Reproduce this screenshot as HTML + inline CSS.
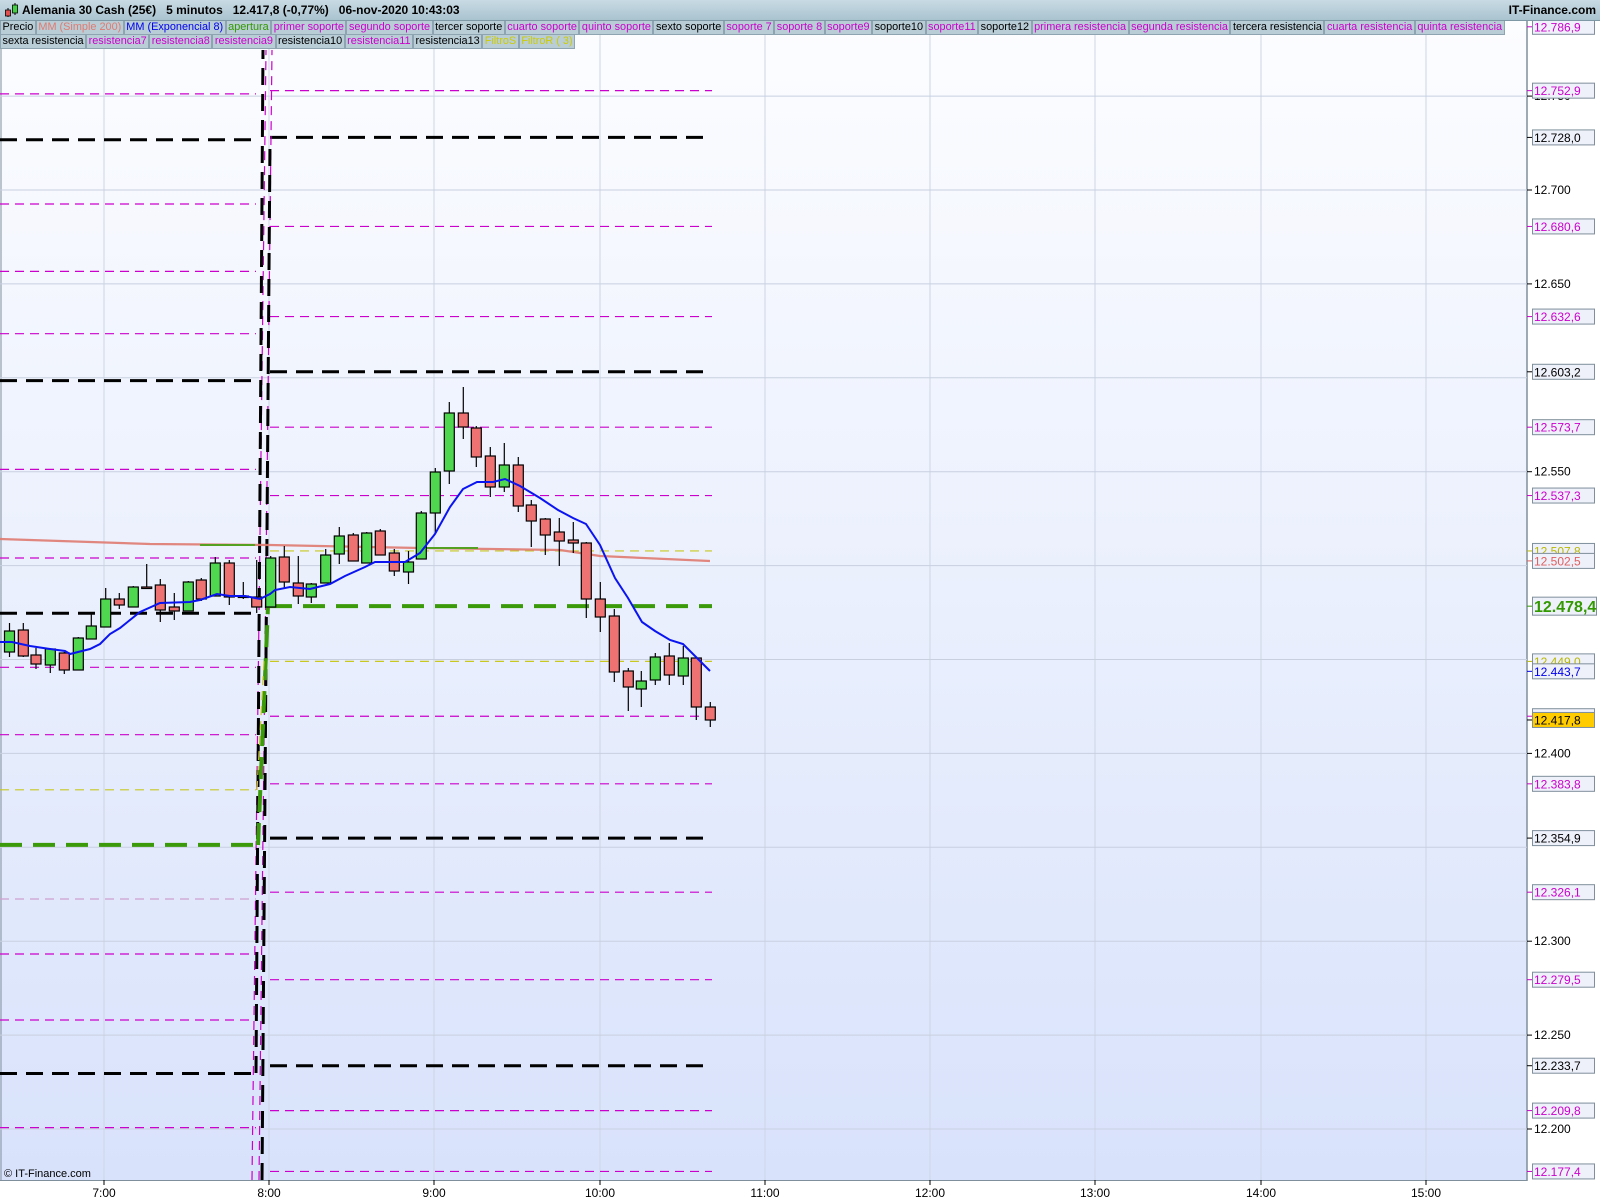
<!DOCTYPE html>
<html><head><meta charset="utf-8">
<style>
html,body{margin:0;padding:0;width:1600px;height:1200px;overflow:hidden;background:#fff;font-family:"Liberation Sans",Arial,sans-serif;}
#hdr{position:absolute;left:0;top:0;width:1600px;height:20px;background:linear-gradient(#c9dbe4,#a9c3cf);border-bottom:1px solid #7f98a6;font-weight:bold;font-size:12px;line-height:20px;}
#hdr .t{position:absolute;left:22px;top:0;white-space:pre;}
#hdr .r{position:absolute;right:4px;top:0;}
.leg{position:absolute;left:0;height:14px;display:flex;font-size:10.9px;line-height:13px;white-space:nowrap;}
.leg span{background:#b9cdd7;border:1px solid #8ea4b0;border-top:none;padding:0 1.5px;height:13px;}
#chart{position:absolute;left:0;top:0;}
</style></head><body>
<svg id="chart" width="1600" height="1200" xmlns="http://www.w3.org/2000/svg">
<defs><linearGradient id="bg" x1="0" y1="0" x2="0" y2="1"><stop offset="0" stop-color="#fcfdff"/><stop offset="1" stop-color="#d8e2fb"/></linearGradient></defs>
<rect x="0" y="20" width="1527" height="1160" fill="url(#bg)"/>
<line x1="1527" y1="20" x2="1527" y2="1181" stroke="#7f8f9c" stroke-width="1.5"/>
<line x1="0" y1="1180.5" x2="1527" y2="1180.5" stroke="#7f8f9c"/>
<line x1="1" y1="20" x2="1" y2="1180" stroke="#7f8f9c"/>
<g id="g"></g>
</svg>
<div id="hdr"><span class="t">Alemania 30 Cash (25€)   5 minutos   12.417,8 (-0,77%)   06-nov-2020 10:43:03</span><span class="r">IT-Finance.com</span></div>
<svg style="position:absolute;left:4px;top:2px" width="16" height="16"><line x1="4" y1="6" x2="4" y2="15" stroke="#000"/><rect x="1.5" y="8" width="5" height="6" fill="#e05050" stroke="#000" stroke-width="0.8"/><line x1="11" y1="1" x2="11" y2="13" stroke="#000"/><rect x="8.5" y="3" width="5" height="8" fill="#40d040" stroke="#000" stroke-width="0.8"/></svg>
<div class="leg" style="top:21px">
<span>Precio</span><span style="color:#e07a70">MM (Simple 200)</span><span style="color:#0000ee">MM (Exponencial 8)</span><span style="color:#339900">apertura</span><span style="color:#cc00cc">primer soporte</span><span style="color:#cc00cc">segundo soporte</span><span>tercer soporte</span><span style="color:#cc00cc">cuarto soporte</span><span style="color:#cc00cc">quinto soporte</span><span>sexto soporte</span><span style="color:#cc00cc">soporte 7</span><span style="color:#cc00cc">soporte 8</span><span style="color:#cc00cc">soporte9</span><span>soporte10</span><span style="color:#cc00cc">soporte11</span><span>soporte12</span><span style="color:#cc00cc">primera resistencia</span><span style="color:#cc00cc">segunda resistencia</span><span>tercera resistencia</span><span style="color:#cc00cc">cuarta resistencia</span><span style="color:#cc00cc">quinta resistencia</span>
</div>
<div class="leg" style="top:35px">
<span>sexta resistencia</span><span style="color:#cc00cc">resistencia7</span><span style="color:#cc00cc">resistencia8</span><span style="color:#cc00cc">resistencia9</span><span>resistencia10</span><span style="color:#cc00cc">resistencia11</span><span>resistencia13</span><span style="color:#cccc00">FiltroS</span><span style="color:#cccc00">FiltroR ( 3)</span>
</div>
<script>
var g=document.getElementById('g'),h='';
function Y(p){return 190+(12700-p)*1.878;}
[104,269,434,600,765,930,1095,1261,1426].forEach(function(x){h+='<line x1="'+x+'" y1="20" x2="'+x+'" y2="1180" stroke="#cdd5e4"/>';});
for(var p=12200;p<=12750;p+=50){var y=Y(p);h+='<line x1="0" y1="'+y+'" x2="1527" y2="'+y+'" stroke="#c8d0e0"/>';}
var M='#cc00cc',K='#000',G='#339900',YE='#c8c800';
function st(c){if(c==K)return 'stroke="#000" stroke-width="3" stroke-dasharray="17 9"';if(c==G)return 'stroke="#3a9a0a" stroke-width="4" stroke-dasharray="22 11"';if(c==YE)return 'stroke="#c8c820" stroke-width="1.2" stroke-dasharray="9 6"';return 'stroke="'+c+'" stroke-width="1.2" stroke-dasharray="9 6"';}
function L(x1,y1,x2,y2,c){h+='<line x1="'+x1+'" y1="'+y1+'" x2="'+x2+'" y2="'+y2+'" '+st(c)+'/>';}
var left=[[93.9,M],[139.8,K],[204,M],[271.4,M],[333.7,M],[380.6,K],[469.4,M],[558,M],[613.3,K],[667.3,M],[734.7,M],[789.8,YE],[844.9,G],[899,'#d0a0d0'],[954,M],[1020,M],[1073.5,K],[1127.6,M]];
left.forEach(function(a){L(0,a[0],256,a[0],a[1]);});
var right=[[12752.9,M],[12728.0,K],[12680.6,M],[12632.6,M],[12603.2,K],[12573.7,M],[12537.3,M],[12507.8,YE],[12478.4,G],[12449.0,YE],[12419.8,M],[12383.8,M],[12354.9,K],[12326.1,M],[12279.5,M],[12233.7,K],[12209.8,M],[12177.4,M]];
right.forEach(function(a){L(270,Y(a[0]),712,Y(a[0]),a[1]);});
L(252,1180,266,50,M);L(259,1180,272,50,M);
L(262,1180,270,140,K);L(256,1073,263,50,K);
L(258,845,268,606,G);L(257,790,264,661,YE);
h+='<polyline fill="none" stroke="#e07a70" stroke-width="2.2" opacity="0.9" points="0,539 150,544 270,545 420,548 560,550 600,556 710,561"/>';
h+='<polyline fill="none" stroke="#55a020" stroke-width="2" points="200,545 255,545"/>';
h+='<polyline fill="none" stroke="#55a020" stroke-width="2" points="420,548 478,548"/>';
var C=[[9.5,652,631,623,657],[23.3,630,656,623,657],[36,655,664,648,669],[50.3,665,649,649,673],[64.3,653,670,652,674],[78.3,670,638,637,670],[91.3,639,626,614,639],[105.7,627,599,588,627],[119.3,599,605,593,609],[133.3,607,587,586,607],[146.7,587,588,564,588],[160.3,585,610,579,622],[174.3,607,611,593,620],[188.3,611,582,581,611],[201.3,580,599,578,601],[215.3,596,563,557,596],[229.3,563,597,560,605],[243.3,596,597,582,599],[256.7,597,607,560,613],[270.7,607,558,556,607],[284.3,557,582,546,588],[298.3,583,596,556,604],[311.3,597,584,583,603],[325.7,583,555,549,583],[339.3,554,536,527,564],[353.3,535,561,533,561],[366.7,563,533,532,563],[380.3,531,555,529,555],[394.3,553,571,549,576],[408.5,572,562,551,584],[421.3,559,513,511,559],[435.3,513,472,468,533],[449.3,471,413,402,484],[463.3,413,427,387,439],[476.3,428,457,426,467],[490.3,456,487,447,497],[504.3,487,465,443,492],[518.3,465,506,457,512],[531.3,505,521,500,547],[545.3,519,535,518,555],[559.3,532,541,518,566],[573.3,540,543,522,553],[586.3,543,599,542,618],[600.3,599,617,582,632],[614.3,616,672,609,682],[628.3,671,687,668,711],[641.3,689,681,671,707],[655.3,680,657,653,685],[669.3,656,675,643,685],[683.3,676,658,646,685],[696.3,658,707,658,720],[710.3,707,720,702,727]];
C.forEach(function(a){var x=a[0],o=a[1],c=a[2],top=Math.min(o,c),bot=Math.max(o,c),up=c<o;
h+='<line x1="'+x+'" y1="'+a[3]+'" x2="'+x+'" y2="'+a[4]+'" stroke="#000" stroke-width="1.2"/>';
var hh=Math.max(bot-top,1.5);
h+='<rect x="'+(x-5)+'" y="'+top+'" width="10" height="'+hh+'" fill="'+(up?'#4fd84f':'#ee7272')+'" stroke="#000" stroke-width="1.2"/>';});
h+='<polyline fill="none" stroke="#0a14f0" stroke-width="2" points="0,642 12,642 30,646 50,649 65,651 70,654 90,649 100,644 110,634 120,628 140,612 160,603 190,602 200,600 217,594 230,596 245,596 260,599 270,594 275,590 290,587 310,589 330,584 345,576 365,567 375,562 405,562 420,553 435,534 450,507 463,489 477,482 493,482 505,479 520,486 540,498 558,510 573,518 586,524 600,545 615,578 628,598 642,622 655,631 670,640 683,644 697,658 710,671"/>';
[12750,12700,12650,12550,12400,12300,12250,12200].forEach(function(v){var y=Y(v);h+='<line x1="1527" y1="'+y+'" x2="1532" y2="'+y+'" stroke="#000"/><text x="1534" y="'+(y+4)+'" font-size="12" font-family="Liberation Sans">'+(v/1000).toFixed(3)+'</text>';});
function B(p,txt,col,bg,big){var y=Y(p);var hh=big?18:15,w=big?64:62;h+='<line x1="1527" y1="'+y+'" x2="1532" y2="'+y+'" stroke="'+col+'"/><rect x="1532.5" y="'+(y-hh/2)+'" width="'+w+'" height="'+hh+'" fill="'+bg+'" stroke="#7f8f9c"/><text x="1534" y="'+(y+(big?6:4.5))+'" font-size="'+(big?16:12)+'" '+(big?'font-weight="bold"':'')+' fill="'+col+'" font-family="Liberation Sans">'+txt+'</text>';}
B(12786.9,'12.786,9',M,'#eef0fa');B(12752.9,'12.752,9',M,'#eef0fa');B(12728.0,'12.728,0','#000','#eef0fa');B(12680.6,'12.680,6',M,'#eef0fa');B(12632.6,'12.632,6',M,'#eef0fa');B(12603.2,'12.603,2','#000','#eef0fa');B(12573.7,'12.573,7',M,'#eef0fa');B(12537.3,'12.537,3',M,'#eef0fa');
B(12507.8,'12.507,8','#b8b800','#eef0fa');B(12502.5,'12.502,5','#e06060','#eef0fa');
B(12478.4,'12.478,4','#339900','#eef0fa',1);B(12449.0,'12.449,0','#b8b800','#eef0fa');B(12443.7,'12.443,7','#0000ee','#eef0fa');B(12419.8,'12.419,8',M,'#eef0fa');B(12417.8,'12.417,8','#000','#ffcc00');
B(12383.8,'12.383,8',M,'#eef0fa');B(12354.9,'12.354,9','#000','#eef0fa');B(12326.1,'12.326,1',M,'#eef0fa');B(12279.5,'12.279,5',M,'#eef0fa');B(12233.7,'12.233,7','#000','#eef0fa');B(12209.8,'12.209,8',M,'#eef0fa');B(12177.4,'12.177,4',M,'#eef0fa');
[['7:00',104],['8:00',269],['9:00',434],['10:00',600],['11:00',765],['12:00',930],['13:00',1095],['14:00',1261],['15:00',1426]].forEach(function(a){h+='<line x1="'+a[1]+'" y1="1180" x2="'+a[1]+'" y2="1185" stroke="#000"/><text x="'+a[1]+'" y="1197" text-anchor="middle" font-size="12" font-family="Liberation Sans">'+a[0]+'</text>';});
h+='<text x="4" y="1177" font-size="11" font-family="Liberation Sans">© IT-Finance.com</text>';
g.innerHTML=h;
</script>
</body></html>
